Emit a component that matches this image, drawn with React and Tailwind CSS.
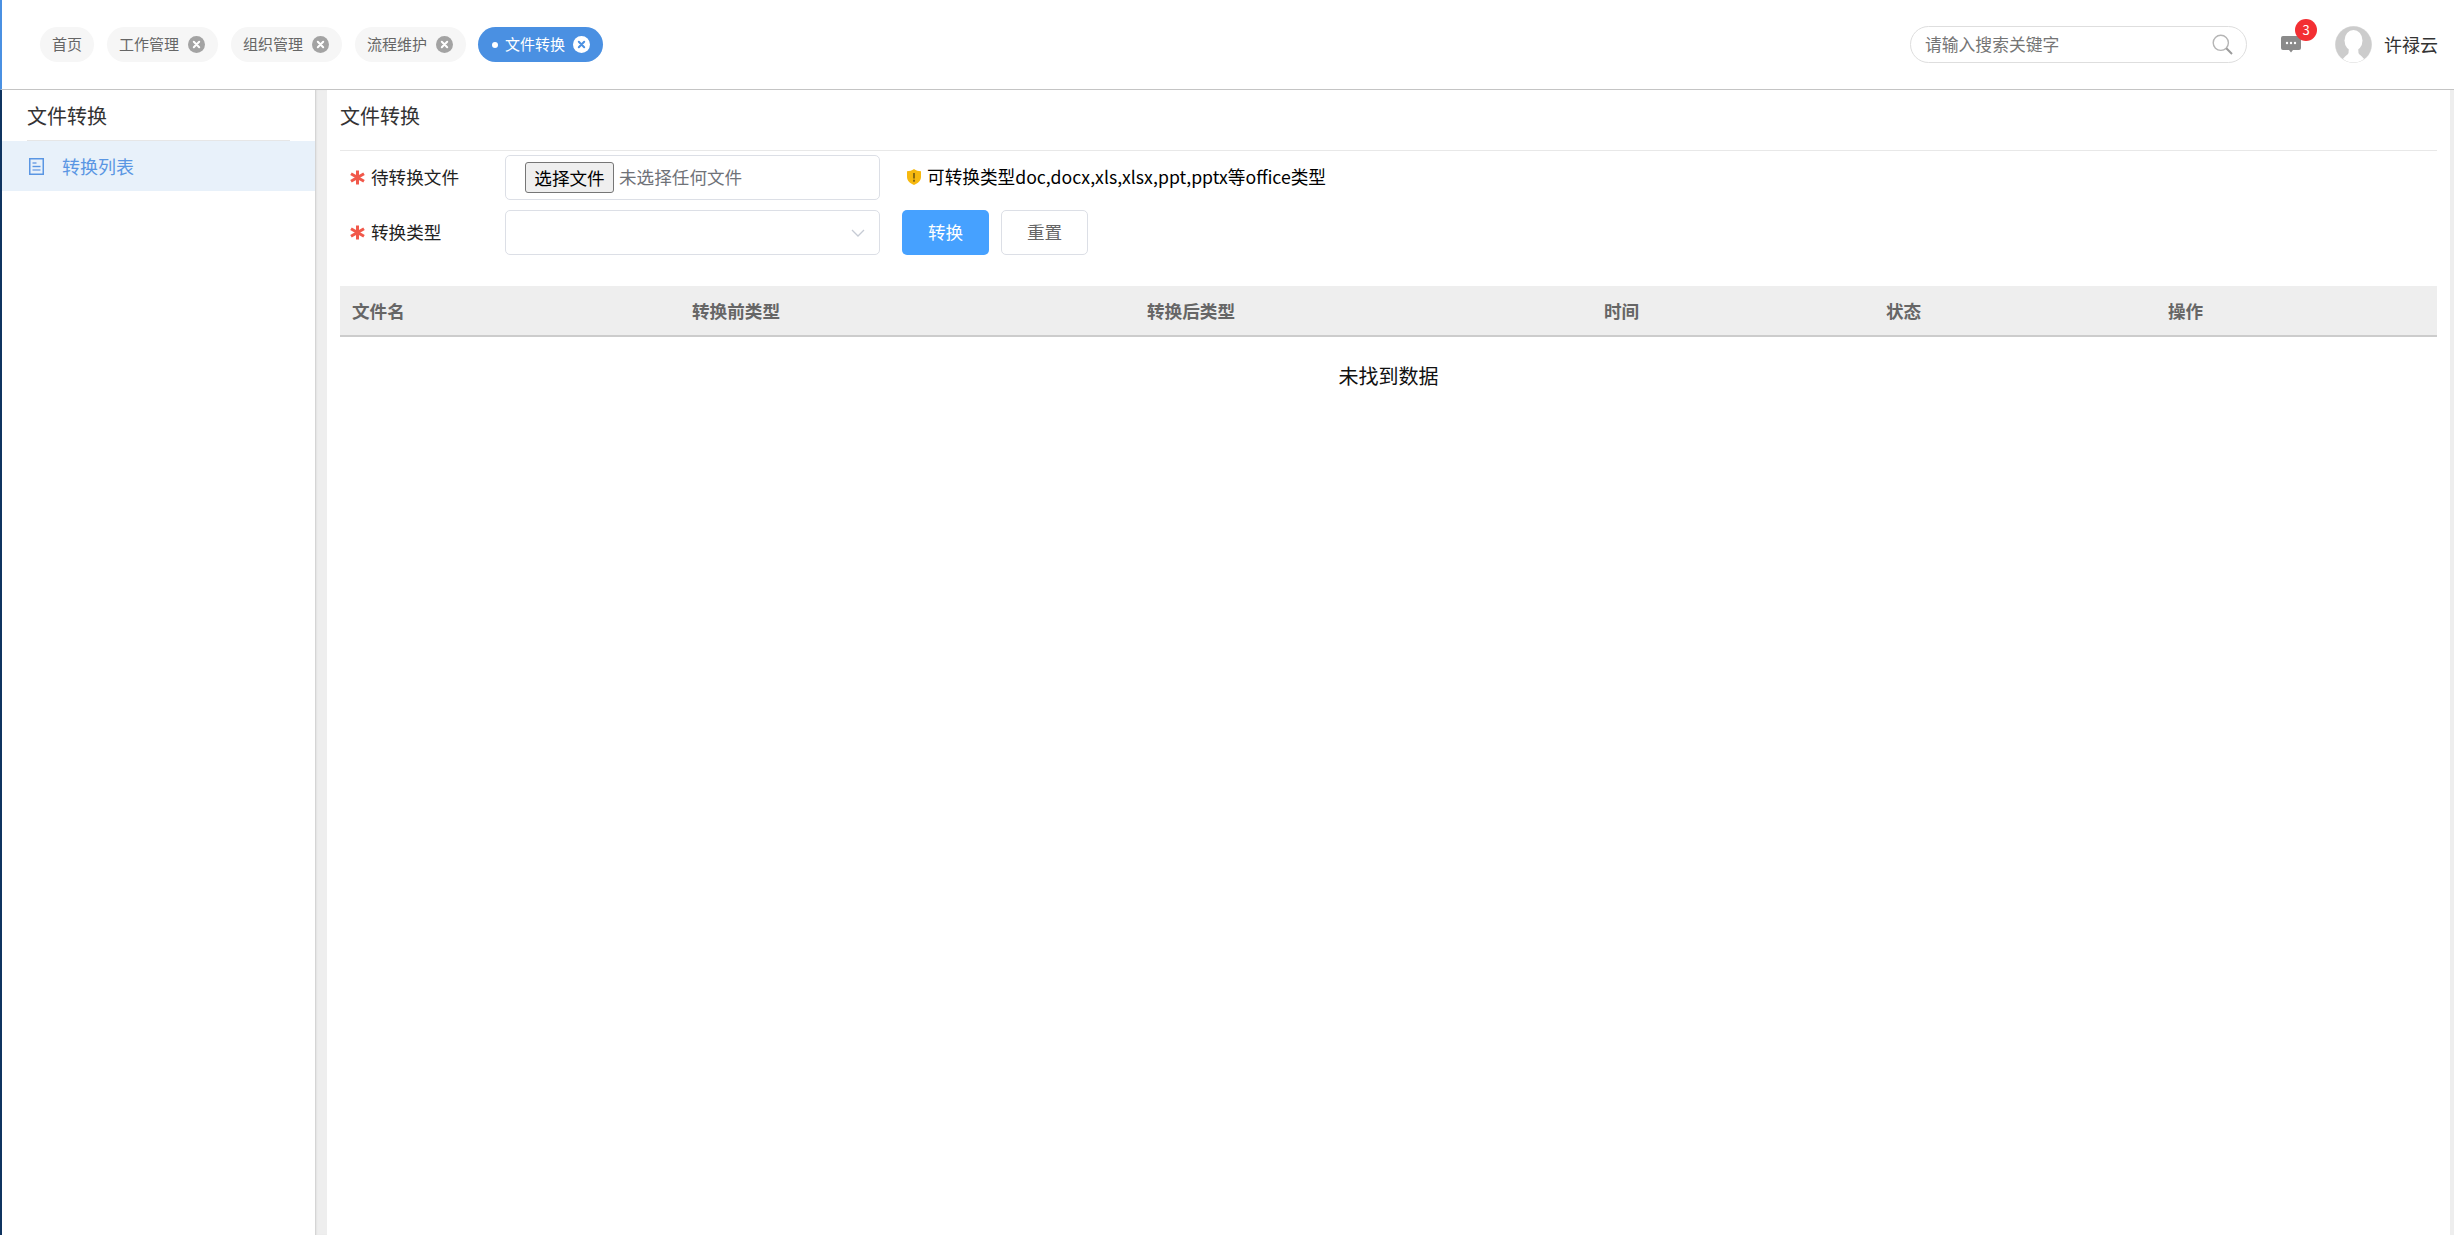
const CJK = { fontFamily: '"Noto Sans CJK SC", "Noto Sans", sans-serif' };

function CloseDot({ active }) {
  return (
    <svg width="17" height="17" viewBox="0 0 17 17" className="shrink-0">
      <circle cx="8.5" cy="8.5" r="8.5" fill={active ? '#ffffff' : '#a3a3a3'} />
      <path d="M5.8 5.8 L11.2 11.2 M11.2 5.8 L5.8 11.2" stroke={active ? '#4a90e2' : '#ffffff'} strokeWidth="2" strokeLinecap="round" />
    </svg>
  );
}

function Tab({ label, closable = true, active = false }) {
  return (
    <div className={`flex h-[35px] items-center rounded-full text-[15px] ${active ? '-ml-px bg-[#4a90e2] pl-[14px] pr-[13px] text-white' : 'bg-[#f6f6f6] text-[#666666] ' + (closable ? 'pl-[12px] pr-[13px]' : 'px-[12px]')}`}>
      {active && <span className="mr-[7px] h-[6px] w-[6px] rounded-full bg-white" />}
      <span>{label}</span>
      {closable && <span className={active ? 'ml-[8px] flex' : 'ml-[9px] flex'}><CloseDot active={active} /></span>}
    </div>
  );
}

function Star() {
  return (
    <svg width="15" height="15" viewBox="0 0 15 15" className="mr-[6px] shrink-0">
      <path d="M7.5 0.5 V14.5 M1 3.75 L14 11.25 M14 3.75 L1 11.25" stroke="#f1584a" strokeWidth="3" />
    </svg>
  );
}

function FormRow({ label, children }) {
  return (
    <div className="flex h-[45px] items-center pl-[10px]">
      <div className="flex w-[155px] items-center text-[17.6px] text-[#222222]">
        <Star />
        <span>{label}</span>
      </div>
      {children}
    </div>
  );
}

const columns = ['文件名', '转换前类型', '转换后类型', '时间', '状态', '操作'];

export default function App() {
  return (
    <div className="flex h-screen flex-col overflow-hidden bg-white" style={CJK}>
      <header className="flex h-[90px] shrink-0 items-center border-b border-b-[#c4c4c4] border-l-2 border-l-[#4a90e2] bg-white pl-[38px] pr-[16px]">
        <div className="flex items-center gap-[13px]">
          <Tab label="首页" closable={false} />
          <Tab label="工作管理" />
          <Tab label="组织管理" />
          <Tab label="流程维护" />
          <Tab label="文件转换" active />
        </div>
        <div className="ml-auto flex items-center">
          <div className="flex h-[37px] w-[337px] items-center rounded-full border border-[#dedede] pl-[14px] pr-[13px]">
            <span className="text-[16.8px] text-[#757575]">请输入搜索关键字</span>
            <svg width="21" height="21" viewBox="0 0 21 21" fill="none" className="ml-auto">
              <circle cx="8.8" cy="8.8" r="7.6" stroke="#b5b5b5" strokeWidth="1.4" />
              <path d="M14.3 14.3 L20 20" stroke="#9b9b9b" strokeWidth="2" />
            </svg>
          </div>
          <div className="relative ml-[34px] h-[17px] w-[20px]">
            <svg width="20" height="17" viewBox="0 0 20 17">
              <path d="M2 0 H18 A2 2 0 0 1 20 2 V12 A2 2 0 0 1 18 14 H12 L10 16.5 L8 14 H2 A2 2 0 0 1 0 12 V2 A2 2 0 0 1 2 0 Z" fill="#8a8a8a" />
              <circle cx="6" cy="7" r="1.2" fill="#fff" />
              <circle cx="10" cy="7" r="1.2" fill="#fff" />
              <circle cx="14" cy="7" r="1.2" fill="#fff" />
            </svg>
            <span className="absolute left-[14px] top-[-17px] flex h-[22px] w-[22px] items-center justify-center rounded-full bg-[#f32f33] text-[13px] text-white">3</span>
          </div>
          <svg width="37" height="37" viewBox="0 0 37 37" className="ml-[34px]">
            <defs>
              <clipPath id="avatarClip"><circle cx="18.5" cy="18.5" r="18" /></clipPath>
            </defs>
            <circle cx="18.5" cy="18.5" r="18.5" fill="#e2e2e2" />
            <circle cx="18.5" cy="18.5" r="18" fill="#cccccc" />
            <g clipPath="url(#avatarClip)" fill="#ffffff">
              <ellipse cx="18.5" cy="14.5" rx="9" ry="10.5" />
              <path d="M14 20 H23 L23.5 27 C24.5 29.5 29 30.5 31 37 H6 C8 30.5 12.5 29.5 13.5 27 Z" />
            </g>
          </svg>
          <span className="ml-[12px] text-[18px] text-[#333333]">许禄云</span>
        </div>
      </header>

      <div className="flex min-h-0 flex-1">
        <aside className="w-[315px] shrink-0 border-l-2 border-l-[#0f3460] bg-white">
          <div className="mx-[25px] flex h-[51px] items-center border-b border-b-[#e6e6e6] pt-[2px] text-[20px] leading-none text-[#333333]">
            文件转换
          </div>
          <div className="flex h-[50px] items-center bg-[#e8f1fa] pl-[27px] text-[18px] text-[#5a96e3]">
            <svg width="15" height="17" viewBox="0 0 15 17" fill="none" className="mr-[18px]">
              <rect x="0.75" y="0.75" width="13.5" height="15.5" stroke="#5a96e3" strokeWidth="1.5" />
              <path d="M3.5 5 H7.5" stroke="#8fb5ea" strokeWidth="2" />
              <path d="M3.5 8.5 H11.5" stroke="#5a96e3" strokeWidth="1.4" />
              <path d="M3.5 12 H11.5" stroke="#8fb5ea" strokeWidth="1.8" />
            </svg>
            转换列表
          </div>
        </aside>
        <div className="w-[12px] shrink-0 bg-[#eeeeee] shadow-[inset_2px_0_2px_-1px_#cccccc]" />

        <main className="min-w-0 flex-1 bg-white px-[13px]">
          <div className="flex h-[61px] items-center border-b border-b-[#e8e8e8] pb-[9px] text-[20px] leading-none text-[#333333]">
            文件转换
          </div>
          <div className="mt-[4px] flex flex-col gap-[10px]">
            <FormRow label="待转换文件">
              <div className="flex h-[45px] w-[375px] items-center rounded-[5px] border border-[#dcdfe6] pl-[19px] text-[17.6px]">
                <button className="h-[31px] w-[89px] rounded-[3px] border border-[#767676] bg-[#efefef] text-[17.6px] leading-none text-black">选择文件</button>
                <span className="ml-[5px] text-[#6f7278]">未选择任何文件</span>
              </div>
              <div className="ml-[27px] flex items-center text-[17.65px] text-black">
                <svg width="14" height="16" viewBox="0 0 14 16" className="mr-[6px]">
                  <path d="M7 0 C9 1.5 11.5 2.2 14 2.2 V8 C14 11.5 11 14.5 7 16 C3 14.5 0 11.5 0 8 V2.2 C2.5 2.2 5 1.5 7 0 Z" fill="#f7b90f" />
                  <rect x="6" y="4" width="2" height="5.5" fill="#8a6a10" />
                  <rect x="6" y="10.7" width="2" height="2" fill="#8a6a10" />
                </svg>
                可转换类型doc,docx,xls,xlsx,ppt,pptx等office类型
              </div>
            </FormRow>
            <FormRow label="转换类型">
              <div className="flex h-[45px] w-[375px] items-center justify-end rounded-[5px] border border-[#dcdfe6] pr-[14px]">
                <svg width="14" height="8" viewBox="0 0 14 8" fill="none">
                  <path d="M1 1 L7 7 L13 1" stroke="#c6cbd4" strokeWidth="1.3" />
                </svg>
              </div>
              <button className="ml-[22px] h-[45px] w-[87px] rounded-[5px] bg-[#46a1ff] text-[17.6px] text-white">转换</button>
              <button className="ml-[12px] h-[45px] w-[87px] rounded-[5px] border border-[#dcdfe6] bg-white text-[17.6px] text-[#666666]">重置</button>
            </FormRow>
          </div>

          <div className="mt-[31px]">
            <div className="grid h-[51px] grid-cols-[340px_455px_457px_282px_282px_281px] items-center border-b-2 border-b-[#cccccc] bg-[#eeeeee] pt-[1px] text-[17.6px] font-bold text-[#666666]">
              {columns.map((c) => (
                <div key={c} className="pl-[12px]">{c}</div>
              ))}
            </div>
            <div className="pt-[24px] text-center text-[20px] leading-[30px] text-[#111111]">未找到数据</div>
          </div>
        </main>
        <div className="w-[4px] shrink-0 bg-[#eeeeee]" />
      </div>
    </div>
  );
}
